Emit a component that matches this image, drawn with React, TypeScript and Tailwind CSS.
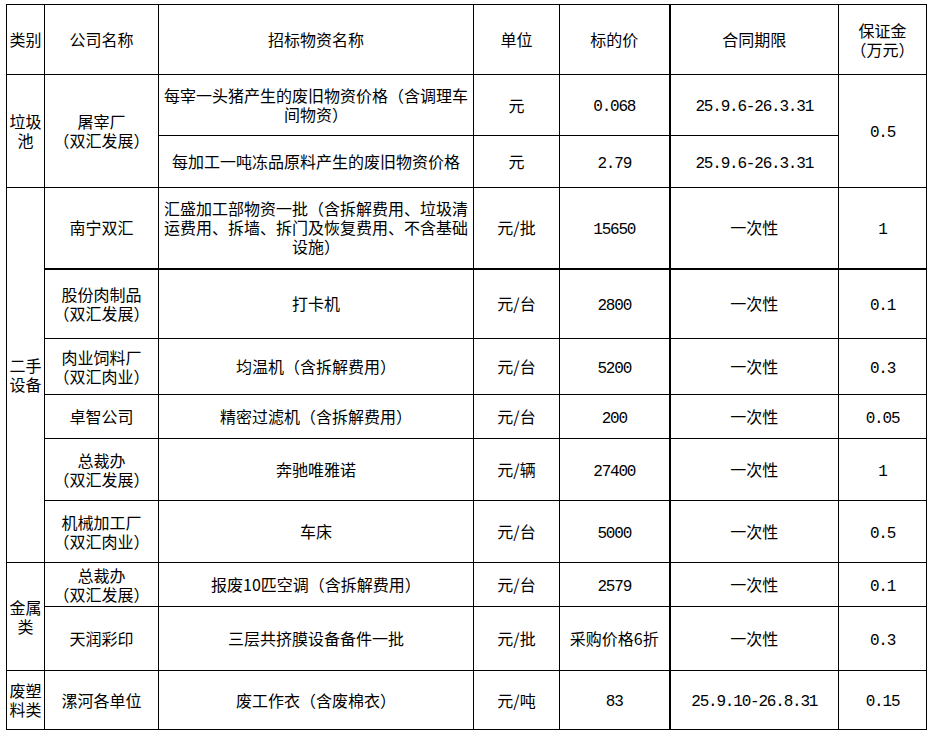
import React from 'react';

const cjk = '[font-family:"Noto_Sans_CJK_SC","Noto_Sans",sans-serif]';
const mono = '[font-family:"Liberation_Mono","Noto_Sans_CJK_SC",monospace] text-[16px] tracking-[-1.2px] pt-[5px]';

type CellProps = {
  children?: React.ReactNode;
  rowSpan?: number;
  num?: boolean;
  thickL?: boolean;
  thickB?: boolean;
};

function Td({ children, rowSpan, num, thickL, thickB }: CellProps) {
  return (
    <td
      rowSpan={rowSpan}
      className={`border border-black p-0 text-center align-middle leading-[19px] ${num ? mono : ''} ${
        thickL ? 'border-l-2' : ''
      } ${thickB ? 'border-b-2' : ''}`}
    >
      {children}
    </td>
  );
}

type Row = {
  h: string;
  cat?: { text: React.ReactNode; span: number };
  company: React.ReactNode;
  item: React.ReactNode;
  unit: string;
  price: string;
  priceNum?: boolean;
  term: string;
  termNum?: boolean;
  deposit?: { text: string; span?: number };
  thick?: boolean;
};

const rows: Row[] = [
  {
    h: 'h-[61px]',
    cat: { text: <>垃圾<br />池</>, span: 2 },
    company: <>屠宰厂<br />（双汇发展）</>,
    item: <>每宰一头猪产生的废旧物资价格（含调理车<br />间物资）</>,
    unit: '元',
    price: '0.068',
    priceNum: true,
    term: '25.9.6-26.3.31',
    termNum: true,
    deposit: { text: '0.5', span: 2 },
  },
  {
    h: 'h-[52px]',
    company: null,
    item: '每加工一吨冻品原料产生的废旧物资价格',
    unit: '元',
    price: '2.79',
    priceNum: true,
    term: '25.9.6-26.3.31',
    termNum: true,
  },
  {
    h: 'h-[81px]',
    cat: { text: <>二手<br />设备</>, span: 6 },
    company: '南宁双汇',
    item: <>汇盛加工部物资一批（含拆解费用、垃圾清<br />运费用、拆墙、拆门及恢复费用、不含基础<br />设施）</>,
    unit: '元/批',
    price: '15650',
    priceNum: true,
    term: '一次性',
    deposit: { text: '1' },
    thick: true,
  },
  {
    h: 'h-[70px]',
    company: <>股份肉制品<br />（双汇发展）</>,
    item: '打卡机',
    unit: '元/台',
    price: '2800',
    priceNum: true,
    term: '一次性',
    deposit: { text: '0.1' },
  },
  {
    h: 'h-[56px]',
    company: <>肉业饲料厂<br />（双汇肉业）</>,
    item: '均温机（含拆解费用）',
    unit: '元/台',
    price: '5200',
    priceNum: true,
    term: '一次性',
    deposit: { text: '0.3' },
  },
  {
    h: 'h-[44px]',
    company: '卓智公司',
    item: '精密过滤机（含拆解费用）',
    unit: '元/台',
    price: '200',
    priceNum: true,
    term: '一次性',
    deposit: { text: '0.05' },
  },
  {
    h: 'h-[62px]',
    company: <>总裁办<br />（双汇发展）</>,
    item: '奔驰唯雅诺',
    unit: '元/辆',
    price: '27400',
    priceNum: true,
    term: '一次性',
    deposit: { text: '1' },
  },
  {
    h: 'h-[62px]',
    company: <>机械加工厂<br />（双汇肉业）</>,
    item: '车床',
    unit: '元/台',
    price: '5000',
    priceNum: true,
    term: '一次性',
    deposit: { text: '0.5' },
  },
  {
    h: 'h-[44px]',
    cat: { text: <>金属<br />类</>, span: 2 },
    company: <>总裁办<br />（双汇发展）</>,
    item: '报废10匹空调（含拆解费用）',
    unit: '元/台',
    price: '2579',
    priceNum: true,
    term: '一次性',
    deposit: { text: '0.1' },
  },
  {
    h: 'h-[64px]',
    company: '天润彩印',
    item: '三层共挤膜设备备件一批',
    unit: '元/批',
    price: '采购价格6折',
    term: '一次性',
    deposit: { text: '0.3' },
  },
  {
    h: 'h-[59px]',
    cat: { text: <>废塑<br />料类</>, span: 1 },
    company: '漯河各单位',
    item: '废工作衣（含废棉衣）',
    unit: '元/吨',
    price: '83',
    priceNum: true,
    term: '25.9.10-26.8.31',
    termNum: true,
    deposit: { text: '0.15' },
  },
];

export default function App() {
  return (
    <div className={`w-[930px] h-[735px] bg-white text-black text-[16px] ${cjk}`}>
      <div className="pl-[6px] pt-[4px]">
        <table className="table-fixed border-collapse w-[920px]">
          <colgroup>
            <col className="w-[38px]" />
            <col className="w-[114px]" />
            <col className="w-[315px]" />
            <col className="w-[86px]" />
            <col className="w-[110px]" />
            <col className="w-[169px]" />
            <col className="w-[88px]" />
          </colgroup>
          <tbody>
            <tr className="h-[70px]">
              <Td>类别</Td>
              <Td>公司名称</Td>
              <Td>招标物资名称</Td>
              <Td>单位</Td>
              <Td>标的价</Td>
              <Td thickL>合同期限</Td>
              <Td>
                保证金
                <br />
                （万元）
              </Td>
            </tr>
            {rows.map((r, i) => (
              <tr key={i} className={r.h}>
                {r.cat && <Td rowSpan={r.cat.span}>{r.cat.text}</Td>}
                {i === 0 && <Td rowSpan={2}>{r.company}</Td>}
                {i !== 0 && i !== 1 && <Td thickB={r.thick}>{r.company}</Td>}
                <Td thickB={r.thick}>{r.item}</Td>
                <Td thickB={r.thick}>{r.unit}</Td>
                <Td thickB={r.thick} num={r.priceNum}>
                  {r.price}
                </Td>
                <Td thickB={r.thick} thickL num={r.termNum}>
                  {r.term}
                </Td>
                {r.deposit && (
                  <Td thickB={r.thick} rowSpan={r.deposit.span} num>
                    {r.deposit.text}
                  </Td>
                )}
              </tr>
            ))}
          </tbody>
        </table>
      </div>
    </div>
  );
}
